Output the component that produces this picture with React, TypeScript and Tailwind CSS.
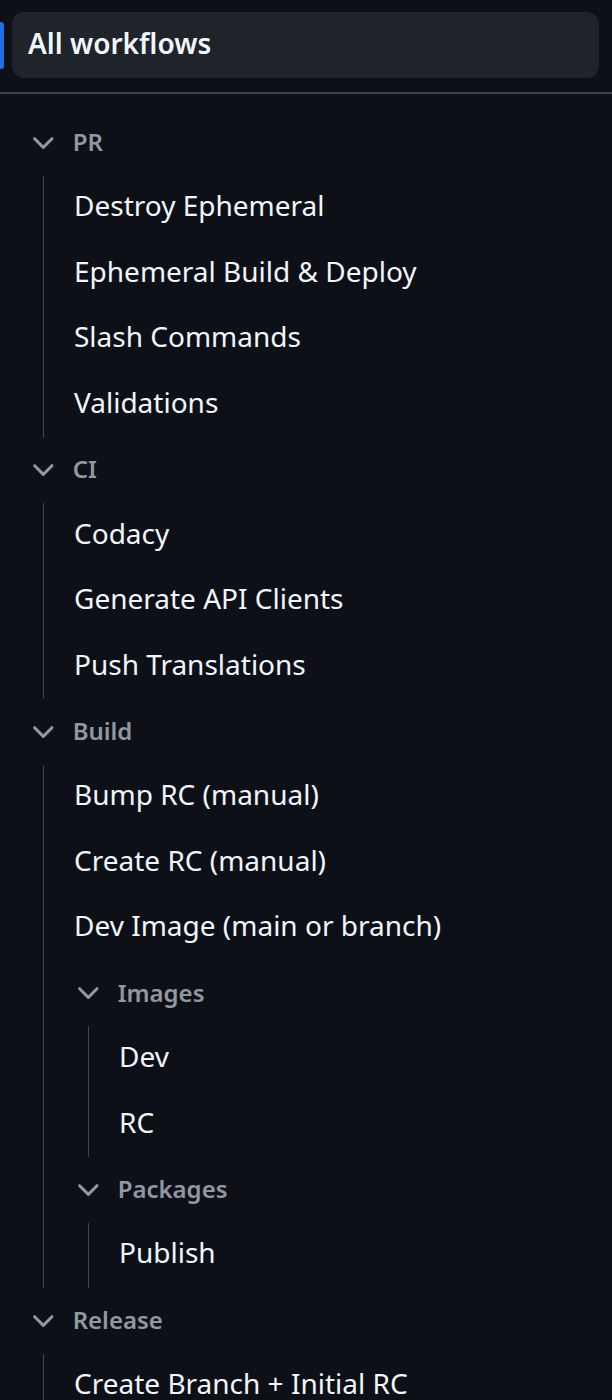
import React from "react";

type Node =
  | { type: "item"; label: string }
  | { type: "group"; label: string; children: Node[] };

const tree: Node[] = [
  {
    type: "group",
    label: "PR",
    children: [
      { type: "item", label: "Destroy Ephemeral" },
      { type: "item", label: "Ephemeral Build & Deploy" },
      { type: "item", label: "Slash Commands" },
      { type: "item", label: "Validations" },
    ],
  },
  {
    type: "group",
    label: "CI",
    children: [
      { type: "item", label: "Codacy" },
      { type: "item", label: "Generate API Clients" },
      { type: "item", label: "Push Translations" },
    ],
  },
  {
    type: "group",
    label: "Build",
    children: [
      { type: "item", label: "Bump RC (manual)" },
      { type: "item", label: "Create RC (manual)" },
      { type: "item", label: "Dev Image (main or branch)" },
      {
        type: "group",
        label: "Images",
        children: [
          { type: "item", label: "Dev" },
          { type: "item", label: "RC" },
        ],
      },
      {
        type: "group",
        label: "Packages",
        children: [{ type: "item", label: "Publish" }],
      },
    ],
  },
  {
    type: "group",
    label: "Release",
    children: [{ type: "item", label: "Create Branch + Initial RC" }],
  },
];

function Chevron() {
  return (
    <svg
      viewBox="0 0 16 16"
      className="w-[32.64px] h-[32.64px] shrink-0"
      fill="#9198a1"
    >
      <path d="M12.78 5.22a.749.749 0 0 1 0 1.06l-4.25 4.25a.749.749 0 0 1-1.06 0L3.22 6.28a.749.749 0 1 1 1.06-1.06L8 8.94l3.72-3.72a.749.749 0 0 1 1.06 0Z" />
    </svg>
  );
}

function Group({ node, nested }: { node: Extract<Node, { type: "group" }>; nested: boolean }) {
  return (
    <div>
      <div
        className={
          (nested ? "pl-[28px]" : "pl-[27px]") +
          " h-[65.45px] flex items-center gap-[13px]"
        }
      >
        <Chevron />
        <span className="text-[24px] font-semibold text-[#9198a1] leading-none pb-[2px]">
          {node.label}
        </span>
      </div>
      <div
        className={
          (nested ? "ml-[44px]" : "ml-[43px]") + " border-l border-[#3d444d]"
        }
      >
        {node.children.map((c, i) =>
          c.type === "item" ? (
            <div
              key={i}
              className="h-[65.45px] flex items-center pl-[30px] pb-[6px] text-[28px] text-[#f0f6fc] leading-none whitespace-nowrap"
            >
              {c.label}
            </div>
          ) : (
            <Group key={i} node={c} nested />
          )
        )}
      </div>
    </div>
  );
}

export default function App() {
  return (
    <div
      className="w-[612px] h-[1400px] overflow-hidden bg-[#0d1117]"
      style={{ fontFamily: '"Noto Sans", "Liberation Sans", sans-serif' }}
    >
      <div className="relative pl-[12px] pr-[13px] pt-[12.24px] pb-[14.5px]">
        <div className="absolute left-0 top-[22px] w-[3.5px] h-[47px] rounded-r-[3px] bg-[#1f6feb]" />
        <div className="h-[65.28px] rounded-[12.24px] bg-[#1f232a] flex items-center pl-[16px] pb-[3px] text-[28px] font-semibold text-[#f0f6fc] leading-none">
          All workflows
        </div>
      </div>
      <div className="h-[2px] bg-[#3d444d]" />
      <div className="pt-[16.32px]">
        {tree.map((n, i) =>
          n.type === "group" ? <Group key={i} node={n} nested={false} /> : null
        )}
      </div>
    </div>
  );
}
